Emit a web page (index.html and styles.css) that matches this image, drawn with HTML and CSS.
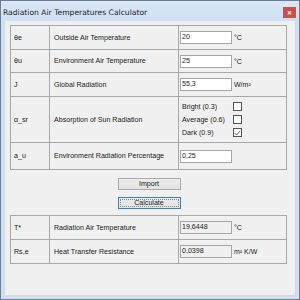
FILE: index.html
```html
<!DOCTYPE html>
<html>
<head>
<meta charset="utf-8">
<link rel="stylesheet" href="styles.css">
</head>
<body>
<div class="window">
  <div class="titlebar">
    <span class="title">Radiation Air Temperatures Calculator</span>
    <span class="close">&#x2715;</span>
  </div>
  <div class="client">
    <table class="grid inputs">
      <tr class="r1"><td class="c1">θe</td><td class="c2">Outside Air Temperature</td><td class="c3"><span class="field">20</span><span class="unit">°C</span></td></tr>
      <tr class="r2"><td class="c1">θu</td><td class="c2">Environment Air Temperature</td><td class="c3"><span class="field">25</span><span class="unit">°C</span></td></tr>
      <tr class="r3"><td class="c1">J</td><td class="c2">Global Radiation</td><td class="c3"><span class="field">55,3</span><span class="unit">W/m²</span></td></tr>
      <tr class="r4"><td class="c1">α_sr</td><td class="c2">Absorption of Sun Radiation</td><td class="c3">
        <div class="checks">
          <div class="check"><span class="clabel">Bright (0.3)</span><span class="box"></span></div>
          <div class="check"><span class="clabel">Average (0.6)</span><span class="box"></span></div>
          <div class="check"><span class="clabel">Dark (0.9)</span><span class="box"><svg viewBox="0 0 8 8" width="8" height="8"><path d="M1 4 L3 6.5 L7 1.2" fill="none" stroke="#555" stroke-width="1"/></svg></span></div>
        </div>
      </td></tr>
      <tr class="r5"><td class="c1">a_u</td><td class="c2">Environment Radiation Percentage</td><td class="c3"><span class="field">0,25</span></td></tr>
    </table>
    <div class="buttons">
      <div class="btn">Import</div>
      <div class="btn focused"><span class="focusrect">Calculate</span></div>
    </div>
    <table class="grid outputs">
      <tr class="o1"><td class="c1">T*</td><td class="c2">Radiation Air Temperature</td><td class="c3"><span class="field ro">19,6448</span><span class="unit">°C</span></td></tr>
      <tr class="o2"><td class="c1">Rs,e</td><td class="c2">Heat Transfer Resistance</td><td class="c3"><span class="field ro">0,0398</span><span class="unit">m² K/W</span></td></tr>
    </table>
  </div>
</div>
</body>
</html>
```
FILE: styles.css
```css
html, body {
  margin: 0;
  padding: 0;
  width: 300px;
  height: 300px;
  overflow: hidden;
  background: #ffffff;
}
.window {
  box-sizing: border-box;
  width: 300px;
  height: 300px;
  border: 1px solid #6d7f95;
  background: #cfe0f3;
  display: flex;
  flex-direction: column;
  font-family: "Liberation Sans", Arial, sans-serif;
}
.titlebar {
  height: 19px;
  display: flex;
  align-items: center;
  justify-content: space-between;
  padding: 0 3px 0 2px;
  background: linear-gradient(#dae7f6, #cfe0f3);
}
.title {
  font-family: "DejaVu Sans", sans-serif;
  font-size: 7.6px;
  color: #1e1e1e;
  padding-top: 3px;
}
.close {
  width: 13px;
  height: 11px;
  margin-top: 3px;
  background: #c75050;
  color: #fff;
  font-size: 6px;
  font-weight: bold;
  display: flex;
  align-items: center;
  justify-content: center;
}
.client {
  flex: 1;
  margin: 1px 3px 3px 3px;
  background: #f0f0f0;
  border: 1px solid #d9d9d9;
  border-top: none;
  padding: 4px 0 0 5px;
  box-sizing: border-box;
}
.grid {
  border-collapse: collapse;
  font-size: 7.1px;
  color: #1a1a1a;
}
.grid td {
  border: 1px solid #a8a8a8;
  padding: 0;
  vertical-align: middle;
}
.c1 { width: 35px; padding-left: 3px !important; }
.c2 { width: 124px; padding-left: 4px !important; }
.c3 { width: 106px; padding-left: 1px !important; }
.r1 td { height: 23px; }
.r2 td { height: 22px; }
.r3 td { height: 23px; }
.r4 td { height: 45px; }
.r5 td { height: 26px; }
.o1 td, .o2 td { height: 23px; }
.c3 {
  white-space: nowrap;
}
.field {
  display: inline-block;
  vertical-align: middle;
  box-sizing: border-box;
  width: 52px;
  height: 13px;
  background: #fff;
  border: 1px solid #a6a6a6;
  padding-left: 1px;
  line-height: 11px;
  font-size: 7.1px;
}
.field.ro {
  background: #f0f0f0;
}
.unit {
  display: inline-block;
  vertical-align: middle;
  margin-left: 2px;
  font-size: 7px;
}
.checks {
  display: flex;
  flex-direction: column;
  gap: 4px;
  padding-left: 2px;
}
.check {
  display: flex;
  align-items: center;
  height: 9px;
}
.clabel {
  width: 51px;
}
.box {
  box-sizing: border-box;
  width: 9px;
  height: 9px;
  border: 1px solid #555;
  background: #fff;
  display: flex;
  align-items: center;
  justify-content: center;
}
.box svg { display: block; }
.buttons {
  display: flex;
  flex-direction: column;
  align-items: center;
  gap: 7px;
  width: 278px;
  padding: 8px 0 6px 0;
}
.btn {
  box-sizing: border-box;
  width: 63px;
  height: 12px;
  border: 1px solid #acacac;
  background: linear-gradient(#ececec, #e2e2e2);
  font-size: 7.1px;
  color: #1a1a1a;
  display: flex;
  align-items: center;
  justify-content: center;
}
.btn.focused {
  border-color: #3c7fb1;
  padding: 1px;
}
.focusrect {
  box-sizing: border-box;
  width: 100%;
  height: 100%;
  border: 1px dotted #8a8a8a;
  display: flex;
  align-items: center;
  justify-content: center;
}
```
